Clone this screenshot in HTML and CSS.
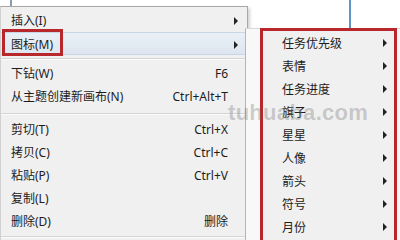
FILE: index.html
```html
<!DOCTYPE html>
<html lang="zh-CN">
<head>
<meta charset="utf-8">
<title>菜单</title>
<link rel="stylesheet" href="styles.css">
</head>
<body>
<div class="screen">
  <span class="bg-line bg-line-left"></span>
  <span class="bg-line bg-line-right"></span>

  <div class="menu">
    <div class="item"><span class="label">插入(I)</span><span class="key"></span><span class="arrow"></span></div>
    <div class="item active"><span class="label">图标(M)</span><span class="key"></span><span class="arrow"></span><span class="mark"></span></div>
    <div class="sep"></div>
    <div class="item"><span class="label">下钻(W)</span><span class="key">F6</span><span class="noarrow"></span></div>
    <div class="item"><span class="label">从主题创建新画布(N)</span><span class="key">Ctrl+Alt+T</span><span class="noarrow"></span></div>
    <div class="sep sep-wide"></div>
    <div class="item"><span class="label">剪切(T)</span><span class="key">Ctrl+X</span><span class="noarrow"></span></div>
    <div class="item"><span class="label">拷贝(C)</span><span class="key">Ctrl+C</span><span class="noarrow"></span></div>
    <div class="item"><span class="label">粘贴(P)</span><span class="key">Ctrl+V</span><span class="noarrow"></span></div>
    <div class="item"><span class="label">复制(L)</span><span class="key"></span><span class="noarrow"></span></div>
    <div class="item"><span class="label">删除(D)</span><span class="key">删除</span><span class="noarrow"></span></div>
    <div class="sep"></div>
  </div>

  <div class="submenu">
    <div class="gutter"></div>
    <div class="redbox">
      <div class="sub-item"><span class="label">任务优先级</span><span class="arrow"></span></div>
      <div class="sub-item"><span class="label">表情</span><span class="arrow"></span></div>
      <div class="sub-item"><span class="label">任务进度</span><span class="arrow"></span></div>
      <div class="sub-item"><span class="label">旗子</span><span class="arrow"></span></div>
      <div class="sub-item"><span class="label">星星</span><span class="arrow"></span></div>
      <div class="sub-item"><span class="label">人像</span><span class="arrow"></span></div>
      <div class="sub-item"><span class="label">箭头</span><span class="arrow"></span></div>
      <div class="sub-item"><span class="label">符号</span><span class="arrow"></span></div>
      <div class="sub-item"><span class="label">月份</span><span class="arrow"></span></div>
    </div>
  </div>

  <div class="watermark">tuhuaba.com</div>
</div>
</body>
</html>
```
FILE: styles.css
```css
* { box-sizing: border-box; }

html, body {
  margin: 0;
  padding: 0;
  background: #ffffff;
}

body {
  font-family: "Noto Sans", "Noto Sans CJK SC", sans-serif;
  font-size: 12px;
  color: #1c1c1c;
}

.screen {
  position: relative;
  width: 400px;
  height: 240px;
  overflow: hidden;
  padding-top: 6px;
  background: #ffffff;
}

.bg-line {
  position: absolute;
  top: 0;
  width: 2px;
  background: #6d8fb0;
}
.bg-line-left { left: 10px; height: 6px; background: #8a9db0; }
.bg-line-right { left: 349px; height: 28px; background: #5f95c4; }

/* main context menu */
.menu {
  width: 248px;
  background: #f0f0f0;
  border: 1px solid #a7a7a7;
  border-left-color: #d0d0d0;
  box-shadow: 2px 2px 3px rgba(0, 0, 0, 0.18);
  padding-top: 2px;
}

.item {
  position: relative;
  display: grid;
  grid-template-columns: 1fr auto 19px;
  align-items: center;
  height: 23px;
  padding-left: 10px;
  line-height: 23px;
  white-space: nowrap;
}

.item.active {
  background: linear-gradient(#e9eff6, #dde6f0);
  border-top: 1px solid #c9d6e6;
  border-bottom: 1px solid #c9d6e6;
}

.key {
  text-align: right;
}

.arrow {
  justify-self: start;
  margin-left: 6px;
  width: 0;
  height: 0;
  border-left: 4px solid #222;
  border-top: 4px solid transparent;
  border-bottom: 4px solid transparent;
}

.mark {
  position: absolute;
  left: 1px;
  top: -4px;
  width: 61px;
  height: 27px;
  border: 3px solid #b8272c;
}

.sep {
  height: 7px;
  display: flex;
  align-items: center;
}
.sep::before {
  content: "";
  display: block;
  width: 100%;
  height: 1px;
  background: #d4d4d4;
  box-shadow: 0 1px 0 #fbfbfb;
}
.sep-wide { height: 10px; }

/* submenu popup */
.submenu {
  position: absolute;
  left: 245px;
  top: 28px;
  width: 160px;
  height: 215px;
  display: flex;
  background: #f6f6f6;
  border-left: 1px solid #b5b5b5;
  border-top: 1px solid #d8d8d8;
}

.gutter {
  width: 14px;
  background: #f8f8f8;
}

.redbox {
  width: 137px;
  height: 220px;
  margin-top: -1px;
  border: 3px solid #b8272c;
  background: #f0f0f0;
  padding-left: 19px;
}

.sub-item {
  display: flex;
  align-items: center;
  justify-content: space-between;
  height: 23px;
  padding-right: 7px;
}

.sub-item .arrow {
  margin-left: 0;
}

.watermark {
  position: absolute;
  left: 228px;
  top: 100px;
  font-family: "Liberation Sans", sans-serif;
  font-weight: bold;
  font-size: 22px;
  color: rgba(110, 110, 110, 0.33);
  letter-spacing: 0.3px;
  pointer-events: none;
}
```
